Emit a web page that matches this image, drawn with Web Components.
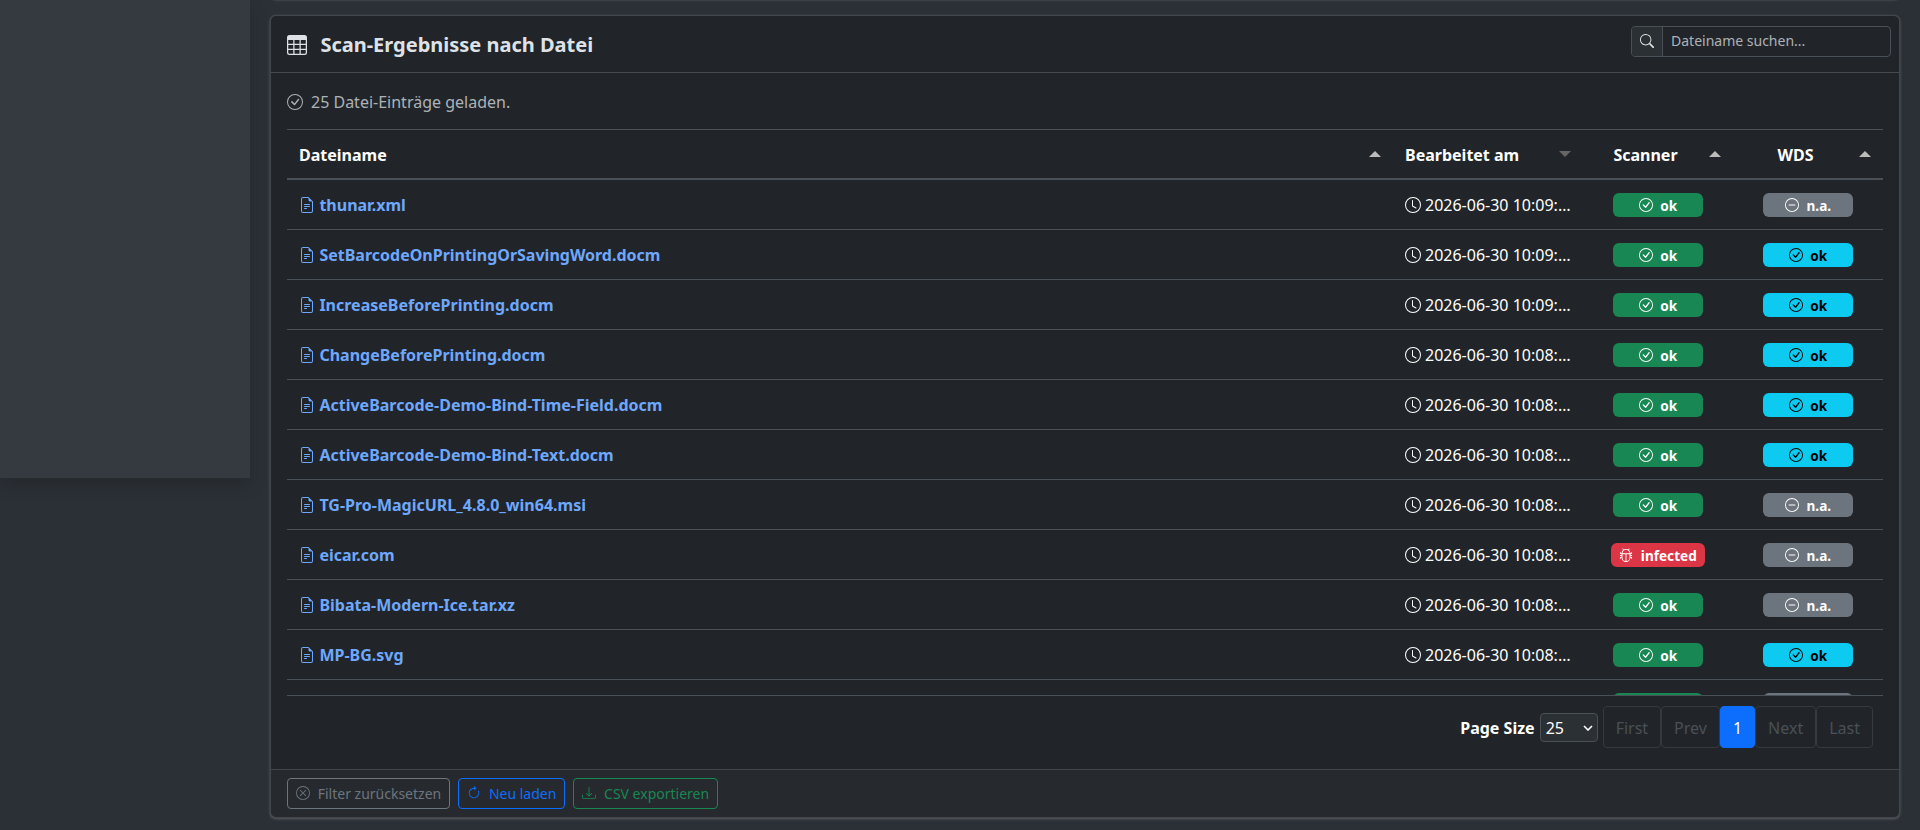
<!DOCTYPE html>
<html lang="de">
<head>
<meta charset="utf-8">
<title>Scan-Ergebnisse</title>
<style>
    html{
        color-scheme: dark;
    }

    body{
        margin: 0;
        height: 830px;
        overflow: hidden;
        background-color: #2b3036;
        color: #dee2e6;
        font-family: "Noto Sans", "Liberation Sans", sans-serif;
        font-size: 16px;
        line-height: 1.5;
    }
</style>
</head>
<body>
<scan-layout>
    <scan-card class="previous"></scan-card>
    <scan-card>
        <card-title slot="title" icon="table">Scan-Ergebnisse nach Datei</card-title>
        <search-field slot="tools" placeholder="Dateiname suchen..."></search-field>
        <load-status>25 Datei-Einträge geladen.</load-status>
        <file-table></file-table>
        <table-pager></table-pager>
        <outline-button slot="footer" icon="xCircle" color="#6c757d">Filter zurücksetzen</outline-button>
        <outline-button slot="footer" icon="reload" color="#0d6efd">Neu laden</outline-button>
        <outline-button slot="footer" icon="download" color="#198754">CSV exportieren</outline-button>
    </scan-card>
</scan-layout>

<script>
const circle = 'M8 15A7 7 0 1 1 8 1a7 7 0 0 1 0 14m0 1A8 8 0 1 0 8 0a8 8 0 0 0 0 16';

const icons = {
    table: ['M0 2a2 2 0 0 1 2-2h12a2 2 0 0 1 2 2v12a2 2 0 0 1-2 2H2a2 2 0 0 1-2-2zm15 2h-4v3h4zm0 4h-4v3h4zm0 4h-4v3h3a1 1 0 0 0 1-1zm-5 3v-3H6v3zm-5 0v-3H1v2a1 1 0 0 0 1 1zm-4-4h4V8H1zm0-4h4V4H1zm5-3v3h4V4zm4 4H6v3h4z'],
    search: ['M11.742 10.344a6.5 6.5 0 1 0-1.397 1.398h-.001q.044.06.098.115l3.85 3.85a1 1 0 0 0 1.415-1.414l-3.85-3.85a1 1 0 0 0-.115-.1zM12 6.5a5.5 5.5 0 1 1-11 0 5.5 5.5 0 0 1 11 0'],
    check: [circle, 'm10.97 4.97-.02.022-3.473 4.425-2.093-2.094a.75.75 0 0 0-1.06 1.06L6.97 11.03a.75.75 0 0 0 1.079-.02l3.992-4.99a.75.75 0 0 0-1.071-1.05'],
    clock: ['M8 3.5a.5.5 0 0 0-1 0V9a.5.5 0 0 0 .252.434l3.5 2a.5.5 0 0 0 .496-.868L8 8.71z', circle],
    dash: [circle, 'M4 8a.5.5 0 0 1 .5-.5h7a.5.5 0 0 1 0 1h-7A.5.5 0 0 1 4 8'],
    xCircle: [circle, 'M4.646 4.646a.5.5 0 0 1 .708 0L8 7.293l2.646-2.647a.5.5 0 0 1 .708.708L8.707 8l2.647 2.646a.5.5 0 0 1-.708.708L8 8.707l-2.646 2.647a.5.5 0 0 1-.708-.708L7.293 8 4.646 5.354a.5.5 0 0 1 0-.708'],
    reload: ['M8 3a5 5 0 1 0 4.546 2.914.5.5 0 0 1 .908-.417A6 6 0 1 1 8 2z', 'M8 4.466V.534a.25.25 0 0 1 .41-.192l2.36 1.966c.12.1.12.284 0 .384L8.41 4.658A.25.25 0 0 1 8 4.466'],
    download: ['M.5 9.9a.5.5 0 0 1 .5.5v2.5a1 1 0 0 0 1 1h12a1 1 0 0 0 1-1v-2.5a.5.5 0 0 1 1 0v2.5a2 2 0 0 1-2 2H2a2 2 0 0 1-2-2v-2.5a.5.5 0 0 1 .5-.5', 'M7.646 11.854a.5.5 0 0 0 .708 0l3-3a.5.5 0 0 0-.708-.708L8.5 10.293V1.5a.5.5 0 0 0-1 0v8.793L5.354 8.146a.5.5 0 1 0-.708.708z'],
    file: ['M5.5 7a.5.5 0 0 0 0 1h5a.5.5 0 0 0 0-1zM5 9.5a.5.5 0 0 1 .5-.5h5a.5.5 0 0 1 0 1h-5a.5.5 0 0 1-.5-.5m0 2a.5.5 0 0 1 .5-.5h2a.5.5 0 0 1 0 1h-2a.5.5 0 0 1-.5-.5', 'M9.5 0H4a2 2 0 0 0-2 2v12a2 2 0 0 0 2 2h8a2 2 0 0 0 2-2V4.5zm0 1v2A1.5 1.5 0 0 0 11 4.5h2V14a1 1 0 0 1-1 1H4a1 1 0 0 1-1-1V2a1 1 0 0 1 1-1z'],
    bug: ['M4.355.522a.5.5 0 0 1 .623.333l.291.956A5 5 0 0 1 8 1c1.007 0 1.946.298 2.731.811l.29-.956a.5.5 0 1 1 .957.29l-.41 1.352A5 5 0 0 1 13 6h.5a.5.5 0 0 0 .5-.5V5a.5.5 0 0 1 1 0v.5A1.5 1.5 0 0 1 13.5 7H13v1h1.5a.5.5 0 0 1 0 1H13v1h.5a1.5 1.5 0 0 1 1.5 1.5v.5a.5.5 0 1 1-1 0v-.5a.5.5 0 0 0-.5-.5H13a5 5 0 0 1-10 0h-.5a.5.5 0 0 0-.5.5v.5a.5.5 0 1 1-1 0v-.5A1.5 1.5 0 0 1 2.5 10H3V9H1.5a.5.5 0 0 1 0-1H3V7h-.5A1.5 1.5 0 0 1 1 5.5V5a.5.5 0 0 1 1 0v.5a.5.5 0 0 0 .5.5H3c0-1.364.547-2.601 1.432-3.503l-.41-1.352a.5.5 0 0 1 .333-.623M4 7v4a4 4 0 0 0 3.5 3.97V7zm4.5 0v7.97A4 4 0 0 0 12 11V7zM12 6a4 4 0 0 0-1.334-2.982A3.98 3.98 0 0 0 8 2a3.98 3.98 0 0 0-2.667 1.018A4 4 0 0 0 4 6z']
};

const files = [
    {name: 'thunar.xml', date: '2026-06-30 10:09:41', scanner: 'ok', wds: 'na'},
    {name: 'SetBarcodeOnPrintingOrSavingWord.docm', date: '2026-06-30 10:09:12', scanner: 'ok', wds: 'ok'},
    {name: 'IncreaseBeforePrinting.docm', date: '2026-06-30 10:09:05', scanner: 'ok', wds: 'ok'},
    {name: 'ChangeBeforePrinting.docm', date: '2026-06-30 10:08:58', scanner: 'ok', wds: 'ok'},
    {name: 'ActiveBarcode-Demo-Bind-Time-Field.docm', date: '2026-06-30 10:08:52', scanner: 'ok', wds: 'ok'},
    {name: 'ActiveBarcode-Demo-Bind-Text.docm', date: '2026-06-30 10:08:47', scanner: 'ok', wds: 'ok'},
    {name: 'TG-Pro-MagicURL_4.8.0_win64.msi', date: '2026-06-30 10:08:39', scanner: 'ok', wds: 'na'},
    {name: 'eicar.com', date: '2026-06-30 10:08:31', scanner: 'infected', wds: 'na'},
    {name: 'Bibata-Modern-Ice.tar.xz', date: '2026-06-30 10:08:24', scanner: 'ok', wds: 'na'},
    {name: 'MP-BG.svg', date: '2026-06-30 10:08:16', scanner: 'ok', wds: 'ok'}
];

// Base class: every element only has to supply its template
class BaseElement extends HTMLElement{
    constructor(){
        super();
        this.attachShadow({mode: "open"});
    }

    connectedCallback(){
        const template = document.createElement('template');
        template.innerHTML = this.getTemplate();
        this.shadowRoot.replaceChildren(template.content.cloneNode(true));
    }
}

class BiIcon extends BaseElement{
    getTemplate(){
        const paths = icons[this.getAttribute('name')].map(d => `<path d="${d}"/>`).join('');
        return `
            <style>
                :host{
                    display: inline-block;
                    width: 1em;
                    height: 1em;
                    line-height: 1;
                    vertical-align: -.125em;
                    flex: none;
                }
                svg{
                    display: block;
                    width: 100%;
                    height: 100%;
                }
            </style>
            <svg viewBox="0 0 16 16" fill="currentColor">${paths}</svg>
        `;
    }
}

class ScanLayout extends BaseElement{
    getTemplate(){
        return `
            <style>
                :host{
                    display: grid;
                    grid-template-columns: 250px 1fr;
                    height: 830px;
                    overflow: hidden;
                }
                aside{
                    height: 478px;
                    background-color: #343a40;
                    box-shadow: 0 8px 16px rgba(0,0,0,.15);
                }
                main{
                    padding: 0 20px;
                    min-width: 0;
                    position: relative;
                }
                ::slotted(.previous){
                    margin-top: -41px;
                    height: 40px;
                }
            </style>
            <aside></aside>
            <main><slot></slot></main>
        `;
    }
}

class ScanCard extends BaseElement{
    getTemplate(){
        const head = `
            <header>
                <slot name="title"></slot>
                <slot name="tools"></slot>
            </header>
            <section><slot></slot></section>
            <footer><slot name="footer"></slot></footer>
        `;
        return `
            <style>
                :host{
                    display: block;
                    box-sizing: border-box;
                    margin-bottom: 16px;
                    border: 1px solid #42464a;
                    border-radius: 6px;
                    background-color: #212529;
                    box-shadow: 0 0 1px rgba(222,226,230,.2), 0 1px 3px rgba(222,226,230,.25);
                }
                header{
                    display: flex;
                    justify-content: space-between;
                    align-items: flex-start;
                    box-sizing: border-box;
                    height: 57px;
                    padding: 10px 8px 0 16px;
                    border-bottom: 1px solid #464a4e;
                }
                section{
                    box-sizing: border-box;
                    height: 696px;
                    padding: 16px 16px 0;
                }
                footer{
                    display: flex;
                    gap: 8px;
                    padding: 8px 16px;
                    border-top: 1px solid #42464a;
                    border-radius: 0 0 5px 5px;
                    background-color: rgba(222,226,230,.03);
                }
            </style>
            ${this.classList.contains('previous') ? '' : head}
        `;
    }
}

class CardTitle extends BaseElement{
    getTemplate(){
        return `
            <style>
                :host{
                    display: flex;
                    align-items: center;
                    gap: 13.4px;
                    height: 38px;
                    font-size: 20px;
                    font-weight: 700;
                }
            </style>
            <bi-icon name="${this.getAttribute('icon')}"></bi-icon>
            <slot></slot>
        `;
    }
}

class SearchField extends BaseElement{
    getTemplate(){
        return `
            <style>
                :host{
                    display: flex;
                    box-sizing: border-box;
                    width: 260px;
                    height: 31px;
                    border: 1px solid #495057;
                    border-radius: 4px;
                    overflow: hidden;
                    font-size: 14px;
                }
                span{
                    display: flex;
                    align-items: center;
                    padding: 0 8px;
                    border-right: 1px solid #495057;
                    background-color: #2b3035;
                }
                bi-icon{
                    margin-top: -1px;
                }
                input{
                    flex: 1;
                    min-width: 0;
                    padding: 0 8px 2px;
                    border: 0;
                    background: none;
                    color: inherit;
                    font: inherit;
                }
                input::placeholder{
                    color: rgba(222,226,230,.75);
                }
            </style>
            <span><bi-icon name="search"></bi-icon></span>
            <input type="text" placeholder="${this.getAttribute('placeholder')}">
        `;
    }
}

class LoadStatus extends BaseElement{
    getTemplate(){
        return `
            <style>
                :host{
                    display: flex;
                    align-items: center;
                    gap: 8px;
                    margin: 1px 0 15px;
                    color: rgba(222,226,230,.75);
                }
            </style>
            <bi-icon name="check"></bi-icon>
            <slot></slot>
        `;
    }
}

class StatusBadge extends BaseElement{
    getTemplate(){
        const types = {
            ok: {icon: 'check', text: 'ok'},
            na: {icon: 'dash', text: 'n.a.'},
            infected: {icon: 'bug', text: 'infected'}
        };
        const type = types[this.getAttribute('type')];
        return `
            <style>
                :host{
                    display: inline-flex;
                    align-items: center;
                    justify-content: center;
                    gap: 7.6px;
                    box-sizing: border-box;
                    min-width: 90px;
                    height: 24px;
                    padding: 2px 8px 0;
                    border-radius: 6px;
                    background-color: #198754;
                    color: #fff;
                    font-size: 13.6px;
                    font-weight: 700;
                    line-height: 1;
                }
                :host([type="na"]){
                    background-color: #6c757d;
                }
                :host([type="infected"]){
                    background-color: #dc3545;
                }
                :host([info]){
                    background-color: #0dcaf0;
                    color: #000;
                }
                bi-icon{
                    width: 14px;
                    height: 14px;
                    margin-top: -2px;
                }
            </style>
            <bi-icon name="${type.icon}"></bi-icon>
            <span>${type.text}</span>
        `;
    }
}

class FileRow extends BaseElement{
    getTemplate(){
        const file = files[this.getAttribute('index')];
        return `
            <style>
                :host{
                    display: grid;
                    grid-template-columns: var(--columns);
                    align-items: center;
                    box-sizing: border-box;
                    height: 50px;
                    border-bottom: 1px solid #495057;
                    color: #fff;
                }
                div{
                    padding: 0 12px;
                    overflow: hidden;
                    text-overflow: ellipsis;
                    white-space: nowrap;
                }
                .status{
                    display: flex;
                    justify-content: center;
                }
                a{
                    color: #6ea8fe;
                    font-weight: 700;
                }
                bi-icon{
                    margin-right: 4px;
                }
                a bi-icon{
                    margin-right: 4.4px;
                }
            </style>
            <div><a><bi-icon name="file"></bi-icon>${file.name}</a></div>
            <div><bi-icon name="clock"></bi-icon>${file.date}</div>
            <div class="status"><status-badge type="${file.scanner}"></status-badge></div>
            <div class="status"><status-badge type="${file.wds}" ${file.wds === 'ok' ? 'info' : ''}></status-badge></div>
        `;
    }
}

class SortHeader extends BaseElement{
    getTemplate(){
        return `
            <style>
                :host{
                    display: flex;
                    align-items: center;
                    padding: 2px 12px 0;
                    color: #fff;
                    font-weight: 700;
                }
                span{
                    flex: 1;
                    padding-right: 12px;
                }
                :host([center]) span{
                    text-align: center;
                    padding-right: 13px;
                }
                i{
                    border: 6px solid transparent;
                    border-top: 0;
                    border-bottom-color: #bbb;
                    margin-top: -2px;
                }
                :host([desc]) i{
                    border-top: 6px solid #666;
                    border-bottom: 0;
                }
            </style>
            <span><slot></slot></span>
            <i></i>
        `;
    }
}

class FileTable extends BaseElement{
    getTemplate(){
        const rows = files.map((file, i) => `<file-row index="${i}"></file-row>`).join('');
        return `
            <style>
                :host{
                    --columns: 1fr 190px 150px 150px;
                    display: block;
                    box-sizing: border-box;
                    height: 567px;
                    border: 1px solid #495057;
                    border-width: 1px 0;
                    overflow: hidden;
                }
                .head{
                    display: grid;
                    grid-template-columns: var(--columns);
                    height: 48px;
                    border-bottom: 2px solid #495057;
                }
                /* The next row is cut off by the scroll area, only the top of its badges shows */
                .peek{
                    display: grid;
                    grid-template-columns: var(--columns);
                    justify-items: center;
                    height: 15px;
                    padding-top: 13px;
                    box-sizing: border-box;
                    overflow: hidden;
                }
                .peek b{
                    width: 90px;
                    height: 24px;
                    border-radius: 6px;
                    background-color: #198754;
                }
                .peek b.na{
                    background-color: #6c757d;
                }
            </style>
            <div class="head">
                <sort-header>Dateiname</sort-header>
                <sort-header desc>Bearbeitet am</sort-header>
                <sort-header center>Scanner</sort-header>
                <sort-header center>WDS</sort-header>
            </div>
            ${rows}
            <div class="peek"><i></i><i></i><b></b><b class="na"></b></div>
        `;
    }
}

class TablePager extends BaseElement{
    getTemplate(){
        return `
            <style>
                :host{
                    display: flex;
                    justify-content: flex-end;
                    align-items: center;
                    padding: 10px 10px 0 0;
                    color: #fff;
                }
                label{
                    font-weight: 700;
                    margin-right: 5px;
                    padding-top: 1px;
                }
                .size{
                    display: grid;
                    align-items: center;
                    margin: 1px 5px 0 0;
                }
                .size > *{
                    grid-area: 1 / 1;
                }
                .size svg{
                    justify-self: end;
                    width: 10px;
                    height: 6px;
                    margin-right: 5px;
                    pointer-events: none;
                }
                select{
                    appearance: none;
                    box-sizing: border-box;
                    width: 58px;
                    height: 29px;
                    padding: 0 5px;
                    border: 1px solid #495057;
                    border-radius: 4px;
                    background-color: #2b3035;
                    color: #fff;
                    font: inherit;
                }
                button{
                    box-sizing: border-box;
                    height: 42px;
                    padding: 1px 12px 0;
                    border: 1px solid #343a40;
                    border-radius: 4px;
                    background: none;
                    color: #495057;
                    font: inherit;
                }
                button.active{
                    border-color: #0d6efd;
                    background-color: #0d6efd;
                    color: #fff;
                }
            </style>
            <label>Page Size</label>
            <div class="size">
                <select><option>25</option></select>
                <svg viewBox="0 0 10 6" fill="none" stroke="#fff" stroke-width="1.6"><path d="M1 1l4 4 4-4"/></svg>
            </div>
            <button>First</button>
            <button>Prev</button>
            <button class="active">1</button>
            <button>Next</button>
            <button>Last</button>
        `;
    }
}

class OutlineButton extends BaseElement{
    getTemplate(){
        const color = this.getAttribute('color');
        return `
            <style>
                :host{
                    display: flex;
                    align-items: center;
                    gap: 7.7px;
                    box-sizing: border-box;
                    height: 31px;
                    padding: 0 8px;
                    border: 1px solid ${color};
                    border-radius: 4px;
                    color: ${color};
                    font-size: 14px;
                }
                bi-icon{
                    margin-top: -2px;
                }
            </style>
            <bi-icon name="${this.getAttribute('icon')}"></bi-icon>
            <slot></slot>
        `;
    }
}

customElements.define("bi-icon", BiIcon);
customElements.define("scan-layout", ScanLayout);
customElements.define("scan-card", ScanCard);
customElements.define("card-title", CardTitle);
customElements.define("search-field", SearchField);
customElements.define("load-status", LoadStatus);
customElements.define("status-badge", StatusBadge);
customElements.define("file-row", FileRow);
customElements.define("sort-header", SortHeader);
customElements.define("file-table", FileTable);
customElements.define("table-pager", TablePager);
customElements.define("outline-button", OutlineButton);
</script>
</body>
</html>
